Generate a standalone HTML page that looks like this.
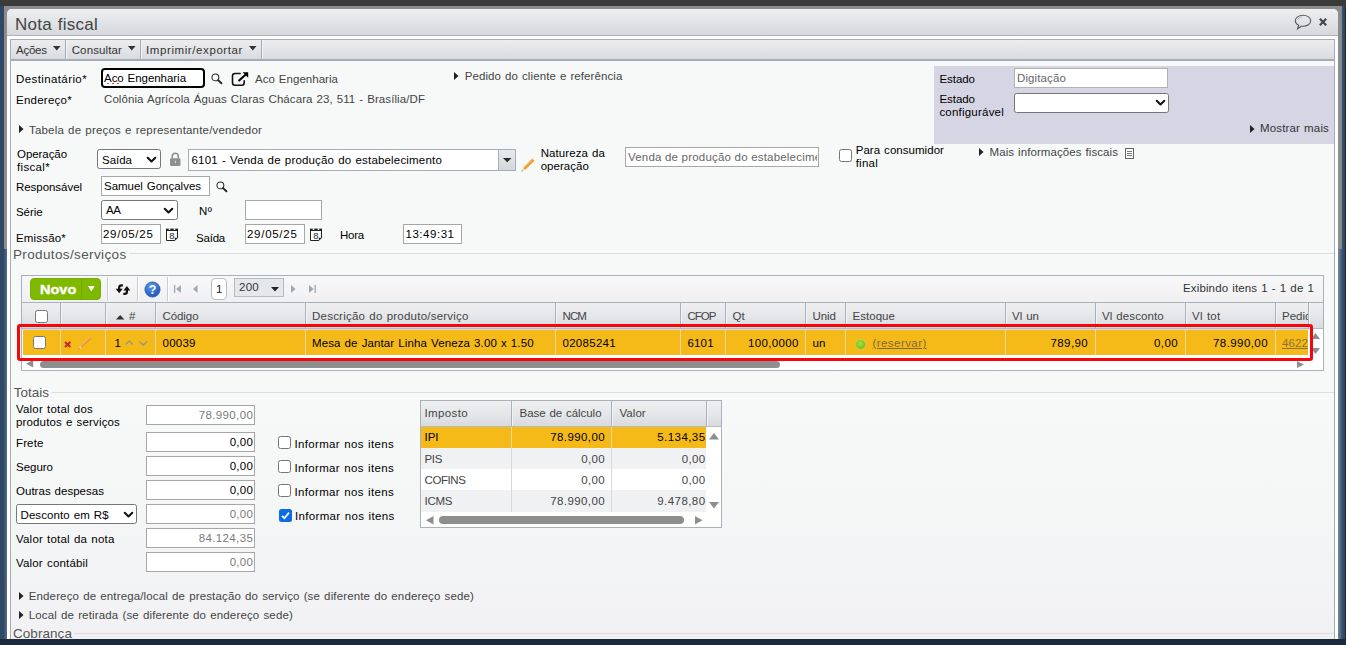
<!DOCTYPE html>
<html><head><meta charset="utf-8"><title>Nota fiscal</title>
<style>
html,body{margin:0;padding:0;}
body{width:1346px;height:645px;position:relative;overflow:hidden;background:#f7f8f8;font-family:"Liberation Sans", sans-serif;font-size:12px;}
div,span,svg{box-sizing:border-box;}
svg{position:absolute;overflow:visible;}

.inp{position:absolute;background:#fff;border:1px solid #a6a6a6;}
.sel{position:absolute;background:#fff;border:1px solid #767676;border-radius:2.5px;}
.cb{position:absolute;width:13px;height:13px;background:#fff;border:1px solid #767676;border-radius:2.5px;}
.hsep{position:absolute;width:1px;background:#a9b1bb;}
.rsep{position:absolute;width:1px;background:#d9c9a0;}
.grad{background:linear-gradient(#f0f0f2,#e4e5e8 55%,#d7d9dd);}

</style></head><body>
<div style="position:absolute;left:0px;top:0px;width:1346px;height:645px;background:#2f4a66;"></div>
<div style="position:absolute;left:0px;top:0px;width:1346px;height:6px;background:#3b3b3b;"></div>
<div style="position:absolute;left:0px;top:6px;width:1346px;height:3px;background:linear-gradient(#6f6f6f,#8d8d8d);"></div>
<div style="position:absolute;left:0px;top:6px;width:4px;height:634px;background:#2d4965;"></div>
<div style="position:absolute;left:4px;top:6px;width:3px;height:244px;background:#8d8d8d;"></div>
<div style="position:absolute;left:4px;top:249px;width:3px;height:391px;background:linear-gradient(90deg,#34506c,#566c84);"></div>
<div style="position:absolute;left:1338px;top:6px;width:4px;height:244px;background:linear-gradient(90deg,#8d8d8d 80%,#6f7f90);"></div>
<div style="position:absolute;left:1338px;top:249px;width:4px;height:391px;background:linear-gradient(90deg,#7a8a9c,#3c5672);"></div>
<div style="position:absolute;left:1342px;top:6px;width:3px;height:634px;background:linear-gradient(90deg,#38536f,#2b4661);"></div>
<div style="position:absolute;left:1345px;top:6px;width:1px;height:634px;background:#23262b;"></div>
<div style="position:absolute;left:4px;top:6px;width:1337px;height:8px;background:#8d8d8d;"></div>
<div style="position:absolute;left:7px;top:9px;width:1331px;height:640px;background:#fff;border-radius:5px 5px 0 0;"></div>
<div style="position:absolute;left:7px;top:9px;width:1331px;height:27px;background:linear-gradient(#eeeff0,#e2e3e6 50%,#d6d8dc);border-radius:5px 5px 0 0;border-bottom:1px solid #a9b2bd;"></div>
<div style="position:absolute;left:10px;top:39px;width:1325px;height:610px;background:linear-gradient(#f7f9f8 60%,#f1f1f3);border-left:1px solid #a3adb9;border-right:1px solid #a3adb9;"></div>
<div style="position:absolute;left:10px;top:39px;width:1325px;height:22px;border:1px solid #a3adb9;border-bottom:2px solid #a3adb9;background:linear-gradient(#ededef,#e3e4e7 50%,#d9dbde);"></div>
<div style="position:absolute;left:65px;top:40px;width:1px;height:19px;background:#a3adb9;"></div>
<div style="position:absolute;left:66px;top:40px;width:1px;height:19px;background:#f4f4f6;"></div>
<div style="position:absolute;left:140px;top:40px;width:1px;height:19px;background:#a3adb9;"></div>
<div style="position:absolute;left:141px;top:40px;width:1px;height:19px;background:#f4f4f6;"></div>
<div style="position:absolute;left:261px;top:40px;width:1px;height:19px;background:#a3adb9;"></div>
<div style="position:absolute;left:262px;top:40px;width:1px;height:19px;background:#f4f4f6;"></div>
<div style="position:absolute;left:0px;top:639px;width:1346px;height:6px;background:#1b2a3d;"></div>
<svg style="left:1294px;top:14px" width="18" height="16" viewBox="0 0 18 16"><path d="M9 1.300C4.700 1.300 1.300 3.700 1.300 6.800C1.300 8.700 2.600 10.300 4.600 11.300L3.500 14.800L7.300 12.200C7.800 12.300 8.400 12.300 9 12.300C13.300 12.300 16.700 9.900 16.700 6.800S13.300 1.300 9 1.300Z" fill="none" stroke="#5a5a5a" stroke-width="1.100"/><path d="M3.500 5.600C4.300 4.100 6 3.200 7.900 3" fill="none" stroke="#999" stroke-width=".8"/></svg>
<svg style="left:1319.200px;top:18px" width="8" height="8" viewBox="0 0 8 8"><path d="M0.800 0.800L7.200 7.200M7.200 0.800L0.800 7.200" stroke="#444" stroke-width="2.100"/></svg>
<svg style="left:53.2px;top:45.8px" width="7.5" height="4.5" viewBox="0 0 7.5 4.5"><path d="M0 0H7.5L3.75 4.5Z" fill="#333"/></svg>
<svg style="left:128.2px;top:45.8px" width="7.5" height="4.5" viewBox="0 0 7.5 4.5"><path d="M0 0H7.5L3.75 4.5Z" fill="#333"/></svg>
<svg style="left:249.2px;top:45.8px" width="7.5" height="4.5" viewBox="0 0 7.5 4.5"><path d="M0 0H7.5L3.75 4.5Z" fill="#333"/></svg>
<div style="position:absolute;left:101px;top:68px;width:104px;height:20px;background:#fff;border:2px solid #000;border-radius:4px;"></div>
<div style="position:absolute;left:107px;top:83px;width:15px;height:1px;background:repeating-linear-gradient(90deg,#f04040 0 2px,transparent 2px 5px);"></div>
<svg style="left:210.5px;top:72.5px" width="12" height="12" viewBox="0 0 12 12"><circle cx="4.400" cy="4.400" r="3.400" fill="#fbfbfb" stroke="#2a2a2a" stroke-width="1.100"/><path d="M7.100 7.100L10.400 10.300" stroke="#222" stroke-width="1.900" stroke-linecap="round"/></svg>
<svg style="left:231px;top:71px" width="18" height="16" viewBox="0 0 18 16"><path d="M9.700 2.500H4Q1.500 2.500 1.500 5V11.700Q1.500 14.200 4 14.200H10.700Q13.200 14.200 13.200 11.700V9.300" fill="none" stroke="#111" stroke-width="1.600"/><path d="M7.600 10L15.300 2.900" stroke="#000" stroke-width="2"/><path d="M11.600 1.300H17.200V6.700Z" fill="#000"/></svg>
<svg style="left:453.5px;top:72px" width="4.5" height="8" viewBox="0 0 4.5 8"><path d="M0 0V8L4.5 4.0Z" fill="#222"/></svg>
<div style="position:absolute;left:934px;top:66px;width:400px;height:78px;background:#d6d5e4;"></div>
<div class="inp" style="left:1014px;top:68px;width:154px;height:20px;border-color:#b2b2b2"></div>
<div class="sel" style="left:1014px;top:93px;width:155px;height:20px;"></div>
<svg style="left:1155.5px;top:100.2px" width="9" height="5.5" viewBox="0 0 9 5.5"><path d="M0.700 0.700L4.5 4.5L8.3 0.700" fill="none" stroke="#111" stroke-width="2" stroke-linecap="round" stroke-linejoin="round"/></svg>
<svg style="left:1249.5px;top:124.5px" width="4.5" height="8" viewBox="0 0 4.5 8"><path d="M0 0V8L4.5 4.0Z" fill="#222"/></svg>
<svg style="left:19.0px;top:125px" width="4.5" height="8" viewBox="0 0 4.5 8"><path d="M0 0V8L4.5 4.0Z" fill="#222"/></svg>
<div class="sel" style="left:97px;top:149px;width:64px;height:20px;"></div>
<svg style="left:147px;top:157px" width="9" height="5.5" viewBox="0 0 9 5.5"><path d="M0.700 0.700L4.5 4.5L8.3 0.700" fill="none" stroke="#111" stroke-width="2" stroke-linecap="round" stroke-linejoin="round"/></svg>
<svg style="left:170px;top:152px" width="11" height="14" viewBox="0 0 11 14"><path d="M2.300 6.500V4C2.300 2.200 3.600 1.200 5.250 1.200S8.200 2.200 8.200 4V6.500" fill="none" stroke="#8f8f8f" stroke-width="1.600"/><rect x="0" y="6.200" width="10.500" height="7.700" rx="1.200" fill="#8f8f8f"/><path d="M4.600 9L5.900 8.600V11.200H5.200Z" fill="#d8d8d8"/></svg>
<div class="inp" style="left:188px;top:149px;width:328px;height:22px;border-color:#a3adbb;"></div>
<div style="position:absolute;left:498px;top:150px;width:17px;height:20px;border-left:1px solid #a3adbb;background:linear-gradient(#e9eaec,#d4d7db);"></div>
<svg style="left:502.7px;top:158px" width="8.5" height="4.2" viewBox="0 0 8.5 4.2"><path d="M0 0H8.5L4.25 4.2Z" fill="#2a2a2a"/></svg>
<svg style="left:520.5px;top:157.5px" width="14.0" height="14.0" viewBox="0 0 14 14"><path d="M11.340 0.540L13.460 2.660L4.060 12.060L1.940 9.940Z" fill="#f09a2e"/><path d="M11.340 0.540L12.050 1.250L2.650 10.650L1.940 9.940Z" fill="#f6bd74"/><path d="M1.940 9.940L4.060 12.060L0.500 13.500Z" fill="#f3dcb8"/><path d="M0.500 13.500L0.950 12.200L1.800 13Z" fill="#333"/></svg>
<div class="inp" style="left:625px;top:147px;width:194px;height:20px;border-color:#a8a8a8"></div>
<div class="cb" style="left:839px;top:149px;"></div>
<svg style="left:978.5px;top:148px" width="4.5" height="8" viewBox="0 0 4.5 8"><path d="M0 0V8L4.5 4.0Z" fill="#222"/></svg>
<svg style="left:1125px;top:148px" width="9" height="11" viewBox="0 0 9 11"><rect x=".5" y=".5" width="8" height="10" fill="#fff" stroke="#666"/><path d="M2 3.500H7M2 5.500H7M2 7.500H7" stroke="#666" stroke-width=".9"/></svg>
<div class="inp" style="left:101px;top:176px;width:109px;height:20px;"></div>
<svg style="left:216px;top:180.5px" width="12" height="12" viewBox="0 0 12 12"><circle cx="4.400" cy="4.400" r="3.400" fill="#fbfbfb" stroke="#2a2a2a" stroke-width="1.100"/><path d="M7.100 7.100L10.400 10.300" stroke="#222" stroke-width="1.900" stroke-linecap="round"/></svg>
<div class="sel" style="left:101px;top:200px;width:77px;height:20px;"></div>
<svg style="left:164px;top:208px" width="9" height="5.5" viewBox="0 0 9 5.5"><path d="M0.700 0.700L4.5 4.5L8.3 0.700" fill="none" stroke="#111" stroke-width="2" stroke-linecap="round" stroke-linejoin="round"/></svg>
<div class="inp" style="left:245px;top:200px;width:77px;height:20px;"></div>
<div class="inp" style="left:101px;top:224px;width:60px;height:20px;"></div>
<svg style="left:166px;top:228px" width="12" height="13" viewBox="0 0 12 13"><path d="M.5 1.500H11.500V9.800L8.800 12.500H.5Z" fill="#fff" stroke="#222" stroke-width="1"/><rect x="0" y=".6" width="12" height="2.400" fill="#222"/><circle cx="3.500" cy="1.200" r=".85" fill="#fff"/><circle cx="8.500" cy="1.200" r=".85" fill="#fff"/><path d="M8.800 12.500V9.800H11.500Z" fill="#222"/><text x="5.900" y="11.300" text-anchor="middle" font-family="Liberation Sans" font-size="9.500" fill="#222">8</text></svg>
<div class="inp" style="left:245px;top:224px;width:60px;height:20px;"></div>
<svg style="left:310px;top:228px" width="12" height="13" viewBox="0 0 12 13"><path d="M.5 1.500H11.500V9.800L8.800 12.500H.5Z" fill="#fff" stroke="#222" stroke-width="1"/><rect x="0" y=".6" width="12" height="2.400" fill="#222"/><circle cx="3.500" cy="1.200" r=".85" fill="#fff"/><circle cx="8.500" cy="1.200" r=".85" fill="#fff"/><path d="M8.800 12.500V9.800H11.500Z" fill="#222"/><text x="5.900" y="11.300" text-anchor="middle" font-family="Liberation Sans" font-size="9.500" fill="#222">8</text></svg>
<div class="inp" style="left:403px;top:224px;width:59px;height:20px;"></div>
<div style="position:absolute;left:129px;top:253px;width:1205px;height:1px;background:#dcdddf;"></div>
<div style="position:absolute;left:21px;top:275px;width:1303px;height:96px;background:#fff;border:1px solid #a9b1bb;"></div>
<div style="position:absolute;left:22px;top:276px;width:1301px;height:26px;background:linear-gradient(#f8f8f9,#f0f0f2);"></div>
<div style="position:absolute;left:30px;top:278px;width:71px;height:22px;background:#7eb900;border:1px solid #78b000;border-radius:4px;"></div>
<div style="position:absolute;left:81px;top:279px;width:1px;height:20px;background:#74a900;"></div>
<svg style="left:87.800px;top:286.400px" width="6.700" height="5.500" viewBox="0 0 6.700 5.500"><path d="M0 0H6.700L3.350 5.500Z" fill="#fff"/></svg>
<div style="position:absolute;left:107px;top:277px;width:1px;height:24px;background:#c9ccd1;"></div>
<div style="position:absolute;left:108px;top:277px;width:1px;height:24px;background:#fff;"></div>
<div style="position:absolute;left:137px;top:277px;width:1px;height:24px;background:#c9ccd1;"></div>
<div style="position:absolute;left:138px;top:277px;width:1px;height:24px;background:#fff;"></div>
<div style="position:absolute;left:167px;top:277px;width:1px;height:24px;background:#c9ccd1;"></div>
<div style="position:absolute;left:168px;top:277px;width:1px;height:24px;background:#fff;"></div>
<svg style="left:116px;top:283.500px" width="14" height="11" viewBox="0 0 14 11"><path d="M6.900 1.300H5.400Q3.200 1.300 3.200 3.400V5.400" fill="none" stroke="#111" stroke-width="2.200"/><path d="M-0.300 4.700H6.700L3.200 9.200Z" fill="#111"/><path d="M7.300 9.900H8.700Q10.900 9.900 10.900 7.800V6" fill="none" stroke="#111" stroke-width="2.200"/><path d="M7.400 6.400H14.300L10.900 1.900Z" fill="#111"/></svg>
<svg style="left:143.500px;top:280.500px" width="17" height="17" viewBox="0 0 17 17"><defs><radialGradient id="hg" cx=".4" cy=".3" r=".8"><stop offset="0" stop-color="#5a9af0"/><stop offset="1" stop-color="#184cb4"/></radialGradient></defs><circle cx="8.500" cy="8.500" r="7.600" fill="url(#hg)" stroke="#2a5db0" stroke-width=".8"/><text x="8.500" y="13" text-anchor="middle" font-family="Liberation Sans" font-weight="bold" font-size="12.500" fill="#fff">?</text></svg>
<svg style="left:173.700px;top:285px" width="7" height="8" viewBox="0 0 7 8"><path d="M0.600 0V8" stroke="#a0a7b0" stroke-width="1.300"/><path d="M6.800 0V8L2.200 4Z" fill="#a0a7b0"/></svg>
<svg style="left:193px;top:285px" width="4.500" height="8" viewBox="0 0 4.500 8"><path d="M4.500 0V8L0 4Z" fill="#a0a7b0"/></svg>
<div style="position:absolute;left:211px;top:278px;width:16px;height:22px;background:#fff;border:1px solid #b9bec6;border-radius:4px;"></div>
<div style="position:absolute;left:234px;top:278px;width:50px;height:19px;background:#e6e7ea;border:1px solid #b4bac2;"></div>
<svg style="left:270.5px;top:286.5px" width="8" height="4.5" viewBox="0 0 8 4.5"><path d="M0 0H8L4.0 4.5Z" fill="#222"/></svg>
<svg style="left:291px;top:285px" width="4.500" height="8" viewBox="0 0 4.500 8"><path d="M0 0V8L4.500 4Z" fill="#a0a7b0"/></svg>
<svg style="left:308.500px;top:285px" width="7" height="8" viewBox="0 0 7 8"><path d="M6.200 0V8" stroke="#a0a7b0" stroke-width="1.300"/><path d="M0 0V8L4.600 4Z" fill="#a0a7b0"/></svg>
<div style="position:absolute;left:22px;top:302px;width:1301px;height:27px;background:linear-gradient(#efeff1,#e6e7ea 50%,#d8dade);border-top:1px solid #a9b1bb;border-bottom:1px solid #b5bbc4;"></div>
<div style="position:absolute;left:60px;top:303px;width:1px;height:25px;background:#a9b1bb;"></div>
<div style="position:absolute;left:61px;top:303px;width:1px;height:25px;background:#f3f3f5;"></div>
<div style="position:absolute;left:105px;top:303px;width:1px;height:25px;background:#a9b1bb;"></div>
<div style="position:absolute;left:106px;top:303px;width:1px;height:25px;background:#f3f3f5;"></div>
<div style="position:absolute;left:155px;top:303px;width:1px;height:25px;background:#a9b1bb;"></div>
<div style="position:absolute;left:156px;top:303px;width:1px;height:25px;background:#f3f3f5;"></div>
<div style="position:absolute;left:305px;top:303px;width:1px;height:25px;background:#a9b1bb;"></div>
<div style="position:absolute;left:306px;top:303px;width:1px;height:25px;background:#f3f3f5;"></div>
<div style="position:absolute;left:555px;top:303px;width:1px;height:25px;background:#a9b1bb;"></div>
<div style="position:absolute;left:556px;top:303px;width:1px;height:25px;background:#f3f3f5;"></div>
<div style="position:absolute;left:680px;top:303px;width:1px;height:25px;background:#a9b1bb;"></div>
<div style="position:absolute;left:681px;top:303px;width:1px;height:25px;background:#f3f3f5;"></div>
<div style="position:absolute;left:725px;top:303px;width:1px;height:25px;background:#a9b1bb;"></div>
<div style="position:absolute;left:726px;top:303px;width:1px;height:25px;background:#f3f3f5;"></div>
<div style="position:absolute;left:805px;top:303px;width:1px;height:25px;background:#a9b1bb;"></div>
<div style="position:absolute;left:806px;top:303px;width:1px;height:25px;background:#f3f3f5;"></div>
<div style="position:absolute;left:845px;top:303px;width:1px;height:25px;background:#a9b1bb;"></div>
<div style="position:absolute;left:846px;top:303px;width:1px;height:25px;background:#f3f3f5;"></div>
<div style="position:absolute;left:1005px;top:303px;width:1px;height:25px;background:#a9b1bb;"></div>
<div style="position:absolute;left:1006px;top:303px;width:1px;height:25px;background:#f3f3f5;"></div>
<div style="position:absolute;left:1095px;top:303px;width:1px;height:25px;background:#a9b1bb;"></div>
<div style="position:absolute;left:1096px;top:303px;width:1px;height:25px;background:#f3f3f5;"></div>
<div style="position:absolute;left:1185px;top:303px;width:1px;height:25px;background:#a9b1bb;"></div>
<div style="position:absolute;left:1186px;top:303px;width:1px;height:25px;background:#f3f3f5;"></div>
<div style="position:absolute;left:1275px;top:303px;width:1px;height:25px;background:#a9b1bb;"></div>
<div style="position:absolute;left:1276px;top:303px;width:1px;height:25px;background:#f3f3f5;"></div>
<div style="position:absolute;left:1308px;top:303px;width:1px;height:25px;background:#a9b1bb;"></div>
<div style="position:absolute;left:1309px;top:303px;width:1px;height:25px;background:#f3f3f5;"></div>
<div class="cb" style="left:35px;top:310px;"></div>
<svg style="left:116px;top:314.800px" width="8.400" height="4.500" viewBox="0 0 8.400 4.500"><path d="M0 4.500H8.400L4.200 0Z" fill="#333"/></svg>
<div style="position:absolute;left:22px;top:329px;width:1287px;height:1px;background:#d5d9df;"></div>
<div style="position:absolute;left:23px;top:330px;width:1285px;height:25px;background:#f5b918;"></div>
<div style="position:absolute;left:60px;top:330px;width:1px;height:25px;background:#e8d9a8;"></div>
<div style="position:absolute;left:105px;top:330px;width:1px;height:25px;background:#e8d9a8;"></div>
<div style="position:absolute;left:155px;top:330px;width:1px;height:25px;background:#e8d9a8;"></div>
<div style="position:absolute;left:305px;top:330px;width:1px;height:25px;background:#e8d9a8;"></div>
<div style="position:absolute;left:555px;top:330px;width:1px;height:25px;background:#e8d9a8;"></div>
<div style="position:absolute;left:680px;top:330px;width:1px;height:25px;background:#e8d9a8;"></div>
<div style="position:absolute;left:725px;top:330px;width:1px;height:25px;background:#e8d9a8;"></div>
<div style="position:absolute;left:805px;top:330px;width:1px;height:25px;background:#e8d9a8;"></div>
<div style="position:absolute;left:845px;top:330px;width:1px;height:25px;background:#e8d9a8;"></div>
<div style="position:absolute;left:1005px;top:330px;width:1px;height:25px;background:#e8d9a8;"></div>
<div style="position:absolute;left:1095px;top:330px;width:1px;height:25px;background:#e8d9a8;"></div>
<div style="position:absolute;left:1185px;top:330px;width:1px;height:25px;background:#e8d9a8;"></div>
<div style="position:absolute;left:1275px;top:330px;width:1px;height:25px;background:#e8d9a8;"></div>
<div class="cb" style="left:33px;top:336px;"></div>
<svg style="left:64px;top:340.500px" width="7.400" height="7" viewBox="0 0 7.400 7"><path d="M1 0.900L6.400 6.100M6.400 0.900L1 6.100" stroke="#c8283a" stroke-width="2.100"/></svg>
<svg style="left:77.5px;top:335.5px" width="14.0" height="14.0" viewBox="0 0 14 14"><path d="M11.340 0.540L13.460 2.660L4.060 12.060L1.940 9.940Z" fill="#f09a2e"/><path d="M11.340 0.540L12.050 1.250L2.650 10.650L1.940 9.940Z" fill="#f6bd74"/><path d="M1.940 9.940L4.060 12.060L0.500 13.500Z" fill="#f3dcb8"/><path d="M0.500 13.500L0.950 12.200L1.800 13Z" fill="#333"/></svg>
<svg style="left:125px;top:340.300px" width="8.400" height="5" viewBox="0 0 8.400 5"><path d="M0.500 4.600L4.200 0.900L7.900 4.600" fill="none" stroke="#9c9788" stroke-width="1.400"/></svg>
<svg style="left:138.800px;top:340.800px" width="8.400" height="5" viewBox="0 0 8.400 5"><path d="M0.500 0.400L4.200 4.100L7.900 0.400" fill="none" stroke="#9c9788" stroke-width="1.400"/></svg>
<svg style="left:855px;top:338.500px" width="11" height="11" viewBox="0 0 11 11"><defs><radialGradient id="gg" cx=".45" cy=".4" r=".7"><stop offset="0" stop-color="#a6e03a"/><stop offset="1" stop-color="#6cb512"/></radialGradient></defs><circle cx="5.500" cy="5.500" r="5" fill="url(#gg)" stroke="#c8d86a" stroke-width=".8"/></svg>
<svg style="left:1311px;top:332.500px" width="9" height="6" viewBox="0 0 9 6"><path d="M0 6H9L4.500 0Z" fill="#8e8e8e"/></svg>
<svg style="left:1311px;top:347.500px" width="9" height="6" viewBox="0 0 9 6"><path d="M0 0H9L4.500 6Z" fill="#8e8e8e"/></svg>
<svg style="left:26.300px;top:359.500px" width="7.200" height="7.500" viewBox="0 0 7.200 7.500"><path d="M7.200 0V7.500L0 3.750Z" fill="#8e8e8e"/></svg>
<div style="position:absolute;left:40px;top:361px;width:740px;height:7px;background:#8e8e8e;border-radius:4px;"></div>
<svg style="left:1297px;top:360.500px" width="7" height="7" viewBox="0 0 7 7"><path d="M0 0V7L7 3.500Z" fill="#8e8e8e"/></svg>
<div style="position:absolute;left:17px;top:324px;width:1296px;height:37px;border:solid #f5060c;border-width:3px 3px 3px 3.500px;border-radius:3px;"></div>
<div style="position:absolute;left:51px;top:392px;width:1283px;height:1px;background:#dcdddf;"></div>
<div class="inp" style="left:146px;top:405px;width:109px;height:20px;"></div>
<div class="inp" style="left:146px;top:432px;width:109px;height:20px;"></div>
<div class="inp" style="left:146px;top:456px;width:109px;height:20px;"></div>
<div class="inp" style="left:146px;top:480px;width:109px;height:20px;"></div>
<div class="sel" style="left:16px;top:504px;width:121px;height:20px;"></div>
<svg style="left:124px;top:512px" width="9" height="5.5" viewBox="0 0 9 5.5"><path d="M0.700 0.700L4.5 4.5L8.3 0.700" fill="none" stroke="#111" stroke-width="2" stroke-linecap="round" stroke-linejoin="round"/></svg>
<div class="inp" style="left:146px;top:504px;width:109px;height:20px;"></div>
<div class="inp" style="left:146px;top:528px;width:109px;height:20px;"></div>
<div class="inp" style="left:146px;top:552px;width:109px;height:20px;"></div>
<div class="cb" style="left:278px;top:436px;"></div>
<div class="cb" style="left:278px;top:460px;"></div>
<div class="cb" style="left:278px;top:484px;"></div>
<div style="position:absolute;left:279px;top:508.500px;width:13px;height:13px;background:#0b6ce8;border-radius:2.500px;"></div>
<svg style="left:279px;top:508.500px" width="13" height="13" viewBox="0 0 13 13"><path d="M3 6.800L5.400 9.200L10 3.600" fill="none" stroke="#fff" stroke-width="1.800"/></svg>
<div style="position:absolute;left:420px;top:400px;width:302px;height:128px;background:#fff;border:1px solid #a9b1bb;"></div>
<div style="position:absolute;left:421px;top:401px;width:300px;height:26px;background:linear-gradient(#efeff1,#e6e7ea 50%,#d8dade);border-bottom:1px solid #b5bbc4;"></div>
<div style="position:absolute;left:511px;top:401px;width:1px;height:25px;background:#a9b1bb;"></div>
<div style="position:absolute;left:512px;top:401px;width:1px;height:25px;background:#f3f3f5;"></div>
<div style="position:absolute;left:611px;top:401px;width:1px;height:25px;background:#a9b1bb;"></div>
<div style="position:absolute;left:612px;top:401px;width:1px;height:25px;background:#f3f3f5;"></div>
<div style="position:absolute;left:706px;top:401px;width:1px;height:25px;background:#a9b1bb;"></div>
<div style="position:absolute;left:707px;top:401px;width:1px;height:25px;background:#f3f3f5;"></div>
<div style="position:absolute;left:421px;top:427px;width:285px;height:21px;background:#f5b918;"></div>
<div style="position:absolute;left:511px;top:427px;width:1px;height:21px;background:#e8d9a8;"></div>
<div style="position:absolute;left:611px;top:427px;width:1px;height:21px;background:#e8d9a8;"></div>
<div style="position:absolute;left:421px;top:448px;width:285px;height:21px;background:#f0f1f3;"></div>
<div style="position:absolute;left:511px;top:448px;width:1px;height:21px;background:#d6d8dc;"></div>
<div style="position:absolute;left:611px;top:448px;width:1px;height:21px;background:#d6d8dc;"></div>
<div style="position:absolute;left:421px;top:469px;width:285px;height:21px;background:#fff;"></div>
<div style="position:absolute;left:511px;top:469px;width:1px;height:21px;background:#d6d8dc;"></div>
<div style="position:absolute;left:611px;top:469px;width:1px;height:21px;background:#d6d8dc;"></div>
<div style="position:absolute;left:421px;top:490px;width:285px;height:21.5px;background:#f0f1f3;"></div>
<div style="position:absolute;left:511px;top:490px;width:1px;height:21.5px;background:#d6d8dc;"></div>
<div style="position:absolute;left:611px;top:490px;width:1px;height:21.5px;background:#d6d8dc;"></div>
<svg style="left:709px;top:432.500px" width="10" height="6.500" viewBox="0 0 10 6.500"><path d="M0 6.500H10L5 0Z" fill="#8e8e8e"/></svg>
<svg style="left:709px;top:501.500px" width="10" height="6.500" viewBox="0 0 10 6.500"><path d="M0 0H10L5 6.500Z" fill="#8e8e8e"/></svg>
<svg style="left:425.500px;top:515.500px" width="7.500" height="8.500" viewBox="0 0 7.500 8.500"><path d="M7.500 0V8.500L0 4.250Z" fill="#8e8e8e"/></svg>
<div style="position:absolute;left:439px;top:515.5px;width:245px;height:8.5px;background:#8e8e8e;border-radius:4.500px;"></div>
<svg style="left:695px;top:515.500px" width="7.500" height="8.500" viewBox="0 0 7.500 8.500"><path d="M0 0V8.500L7.500 4.250Z" fill="#8e8e8e"/></svg>
<svg style="left:19.0px;top:591.5px" width="4.5" height="8" viewBox="0 0 4.5 8"><path d="M0 0V8L4.5 4.0Z" fill="#222"/></svg>
<svg style="left:19.0px;top:610.5px" width="4.5" height="8" viewBox="0 0 4.5 8"><path d="M0 0V8L4.5 4.0Z" fill="#222"/></svg>
<div style="position:absolute;left:74px;top:633px;width:1260px;height:1px;background:#dcdddf;"></div>
<span style="position:absolute;left:15.00px;top:13.00px;height:23px;line-height:23px;white-space:pre;font-size:17px;color:#444;letter-spacing:0.266px;word-spacing:0.7px;">Nota fiscal</span>
<span style="position:absolute;left:16.00px;top:42.00px;height:16px;line-height:16px;white-space:pre;font-size:11.5px;color:#333;letter-spacing:-0.254px;">Ações</span>
<span style="position:absolute;left:71.70px;top:42.00px;height:16px;line-height:16px;white-space:pre;font-size:11.5px;color:#333;letter-spacing:0.120px;">Consultar</span>
<span style="position:absolute;left:146.00px;top:42.00px;height:16px;line-height:16px;white-space:pre;font-size:11.5px;color:#333;letter-spacing:0.594px;">Imprimir/exportar</span>
<span style="position:absolute;left:16.00px;top:71.00px;height:16px;line-height:16px;white-space:pre;font-size:11.5px;color:#000;letter-spacing:0.397px;">Destinatário*</span>
<span style="position:absolute;left:104.00px;top:70.00px;height:16px;line-height:16px;white-space:pre;font-size:11.5px;color:#000;letter-spacing:-0.039px;word-spacing:0.7px;">Aco Engenharia</span>
<span style="position:absolute;left:255.00px;top:71.00px;height:16px;line-height:16px;white-space:pre;font-size:11.5px;color:#444;letter-spacing:0.033px;word-spacing:0.7px;">Aco Engenharia</span>
<span style="position:absolute;left:464.70px;top:68.00px;height:16px;line-height:16px;white-space:pre;font-size:11.5px;color:#444;letter-spacing:0.095px;word-spacing:0.7px;">Pedido do cliente e referência</span>
<span style="position:absolute;left:16.00px;top:92.00px;height:16px;line-height:16px;white-space:pre;font-size:11.5px;color:#000;letter-spacing:0.253px;">Endereço*</span>
<span style="position:absolute;left:104.00px;top:91.00px;height:16px;line-height:16px;white-space:pre;font-size:11.5px;color:#444;letter-spacing:0.084px;word-spacing:0.7px;">Colônia Agrícola Águas Claras Chácara 23, 511 - Brasília/DF</span>
<span style="position:absolute;left:939.40px;top:71.00px;height:16px;line-height:16px;white-space:pre;font-size:11.5px;color:#000;letter-spacing:-0.035px;">Estado</span>
<span style="position:absolute;left:1017.00px;top:70.00px;height:16px;line-height:16px;white-space:pre;font-size:11.5px;color:#666;letter-spacing:0.116px;">Digitação</span>
<span style="position:absolute;left:939.40px;top:91.00px;height:16px;line-height:16px;white-space:pre;font-size:11.5px;color:#000;letter-spacing:-0.035px;">Estado</span>
<span style="position:absolute;left:939.40px;top:104.00px;height:16px;line-height:16px;white-space:pre;font-size:11.5px;color:#000;letter-spacing:0.215px;">configurável</span>
<span style="position:absolute;left:1260.00px;top:120.00px;height:16px;line-height:16px;white-space:pre;font-size:11.5px;color:#333;letter-spacing:0.154px;word-spacing:0.7px;">Mostrar mais</span>
<span style="position:absolute;left:29.00px;top:122.00px;height:16px;line-height:16px;white-space:pre;font-size:11.5px;color:#444;letter-spacing:0.188px;word-spacing:0.7px;">Tabela de preços e representante/vendedor</span>
<span style="position:absolute;left:17.00px;top:146.00px;height:16px;line-height:16px;white-space:pre;font-size:11.5px;color:#000;letter-spacing:-0.064px;">Operação</span>
<span style="position:absolute;left:17.00px;top:159.00px;height:16px;line-height:16px;white-space:pre;font-size:11.5px;color:#000;letter-spacing:0.330px;">fiscal*</span>
<span style="position:absolute;left:102.00px;top:152.00px;height:16px;line-height:16px;white-space:pre;font-size:11.5px;color:#000;letter-spacing:-0.013px;">Saída</span>
<span style="position:absolute;left:191.50px;top:152.00px;height:16px;line-height:16px;white-space:pre;font-size:11.5px;color:#000;letter-spacing:0.181px;word-spacing:0.7px;">6101 - Venda de produção do estabelecimento</span>
<span style="position:absolute;left:540.70px;top:145.00px;height:16px;line-height:16px;white-space:pre;font-size:11.5px;color:#000;letter-spacing:0.086px;word-spacing:0.7px;">Natureza da</span>
<span style="position:absolute;left:540.70px;top:158.00px;height:16px;line-height:16px;white-space:pre;font-size:11.5px;color:#000;letter-spacing:0.041px;">operação</span>
<span style="position:absolute;left:628.00px;top:149.00px;height:16px;line-height:16px;white-space:pre;font-size:11.5px;color:#666;width:189px;overflow:hidden;letter-spacing:0.2px;">Venda de produção do estabelecimento</span>
<span style="position:absolute;left:855.70px;top:142.00px;height:16px;line-height:16px;white-space:pre;font-size:11.5px;color:#000;letter-spacing:0.044px;word-spacing:0.7px;">Para consumidor</span>
<span style="position:absolute;left:855.70px;top:155.00px;height:16px;line-height:16px;white-space:pre;font-size:11.5px;color:#000;letter-spacing:0.238px;">final</span>
<span style="position:absolute;left:989.50px;top:144.00px;height:16px;line-height:16px;white-space:pre;font-size:11.5px;color:#444;letter-spacing:0.076px;word-spacing:0.7px;">Mais informações fiscais</span>
<span style="position:absolute;left:16.00px;top:179.00px;height:16px;line-height:16px;white-space:pre;font-size:11.5px;color:#000;letter-spacing:-0.044px;">Responsável</span>
<span style="position:absolute;left:104.00px;top:178.00px;height:16px;line-height:16px;white-space:pre;font-size:11.5px;color:#000;letter-spacing:-0.014px;word-spacing:0.7px;">Samuel Gonçalves</span>
<span style="position:absolute;left:16.00px;top:204.00px;height:16px;line-height:16px;white-space:pre;font-size:11.5px;color:#000;letter-spacing:-0.072px;">Série</span>
<span style="position:absolute;left:106.00px;top:202.00px;height:16px;line-height:16px;white-space:pre;font-size:11.5px;color:#000;letter-spacing:-0.422px;">AA</span>
<span style="position:absolute;left:199.00px;top:203.00px;height:16px;line-height:16px;white-space:pre;font-size:11.5px;color:#000;letter-spacing:0.492px;">Nº</span>
<span style="position:absolute;left:16.00px;top:230.00px;height:16px;line-height:16px;white-space:pre;font-size:11.5px;color:#000;letter-spacing:0.178px;">Emissão*</span>
<span style="position:absolute;left:103.00px;top:226.00px;height:16px;line-height:16px;white-space:pre;font-size:11.5px;color:#000;letter-spacing:0.717px;">29/05/25</span>
<span style="position:absolute;left:196.00px;top:230.00px;height:16px;line-height:16px;white-space:pre;font-size:11.5px;color:#000;letter-spacing:-0.212px;">Saída</span>
<span style="position:absolute;left:247.00px;top:226.00px;height:16px;line-height:16px;white-space:pre;font-size:11.5px;color:#000;letter-spacing:0.717px;">29/05/25</span>
<span style="position:absolute;left:340.00px;top:227.00px;height:16px;line-height:16px;white-space:pre;font-size:11.5px;color:#000;letter-spacing:-0.234px;">Hora</span>
<span style="position:absolute;left:405.50px;top:226.00px;height:16px;line-height:16px;white-space:pre;font-size:11.5px;color:#000;letter-spacing:0.529px;">13:49:31</span>
<span style="position:absolute;left:13.00px;top:245.00px;height:19px;line-height:19px;white-space:pre;font-size:13.5px;color:#555;letter-spacing:0.365px;">Produtos/serviços</span>
<span style="position:absolute;left:40.00px;top:280.00px;height:19px;line-height:19px;white-space:pre;font-size:13px;color:#fff;font-weight:bold;transform:scaleX(1.115);transform-origin:0 0;-webkit-text-stroke:0.35px #fff;">Novo</span>
<span style="position:absolute;left:216.00px;top:281.00px;height:16px;line-height:16px;white-space:pre;font-size:11.5px;color:#222;">1</span>
<span style="position:absolute;left:239.00px;top:279.00px;height:16px;line-height:16px;white-space:pre;font-size:11.5px;color:#333;letter-spacing:0.271px;">200</span>
<span style="position:absolute;left:1183.00px;top:280.00px;height:16px;line-height:16px;white-space:pre;font-size:11.5px;color:#333;letter-spacing:0.136px;word-spacing:0.7px;">Exibindo itens 1 - 1 de 1</span>
<span style="position:absolute;left:129.00px;top:308.00px;height:16px;line-height:16px;white-space:pre;font-size:11.5px;color:#444;letter-spacing:0.594px;">#</span>
<span style="position:absolute;left:162.50px;top:308.00px;height:16px;line-height:16px;white-space:pre;font-size:11.5px;color:#444;letter-spacing:-0.076px;">Código</span>
<span style="position:absolute;left:312.00px;top:308.00px;height:16px;line-height:16px;white-space:pre;font-size:11.5px;color:#444;letter-spacing:0.227px;word-spacing:0.7px;">Descrição do produto/serviço</span>
<span style="position:absolute;left:562.50px;top:308.00px;height:16px;line-height:16px;white-space:pre;font-size:11.5px;color:#444;letter-spacing:-0.901px;">NCM</span>
<span style="position:absolute;left:687.50px;top:308.00px;height:16px;line-height:16px;white-space:pre;font-size:11.5px;color:#444;letter-spacing:-0.988px;">CFOP</span>
<span style="position:absolute;left:732.50px;top:308.00px;height:16px;line-height:16px;white-space:pre;font-size:11.5px;color:#444;letter-spacing:-0.070px;">Qt</span>
<span style="position:absolute;left:812.50px;top:308.00px;height:16px;line-height:16px;white-space:pre;font-size:11.5px;color:#444;letter-spacing:-0.114px;">Unid</span>
<span style="position:absolute;left:852.50px;top:308.00px;height:16px;line-height:16px;white-space:pre;font-size:11.5px;color:#444;letter-spacing:0.042px;">Estoque</span>
<span style="position:absolute;left:1012.00px;top:308.00px;height:16px;line-height:16px;white-space:pre;font-size:11.5px;color:#444;letter-spacing:0.016px;word-spacing:0.7px;">Vl un</span>
<span style="position:absolute;left:1102.00px;top:308.00px;height:16px;line-height:16px;white-space:pre;font-size:11.5px;color:#444;letter-spacing:0.081px;word-spacing:0.7px;">Vl desconto</span>
<span style="position:absolute;left:1192.00px;top:308.00px;height:16px;line-height:16px;white-space:pre;font-size:11.5px;color:#444;letter-spacing:0.264px;word-spacing:0.7px;">Vl tot</span>
<span style="position:absolute;left:1282.00px;top:308.00px;height:16px;line-height:16px;white-space:pre;font-size:11.5px;color:#444;width:26px;overflow:hidden;">Pedido</span>
<span style="position:absolute;left:114.50px;top:335.00px;height:16px;line-height:16px;white-space:pre;font-size:11.5px;color:#000;">1</span>
<span style="position:absolute;left:162.50px;top:335.00px;height:16px;line-height:16px;white-space:pre;font-size:11.5px;color:#000;letter-spacing:0.243px;">00039</span>
<span style="position:absolute;left:312.00px;top:335.00px;height:16px;line-height:16px;white-space:pre;font-size:11.5px;color:#000;letter-spacing:0.116px;word-spacing:0.7px;">Mesa de Jantar Linha Veneza 3.00 x 1.50</span>
<span style="position:absolute;left:562.50px;top:335.00px;height:16px;line-height:16px;white-space:pre;font-size:11.5px;color:#000;letter-spacing:0.291px;">02085241</span>
<span style="position:absolute;left:687.50px;top:335.00px;height:16px;line-height:16px;white-space:pre;font-size:11.5px;color:#000;letter-spacing:0.152px;">6101</span>
<span style="position:absolute;left:748.00px;top:335.00px;height:16px;line-height:16px;white-space:pre;font-size:11.5px;color:#000;letter-spacing:0.341px;">100,0000</span>
<span style="position:absolute;left:812.50px;top:335.00px;height:16px;line-height:16px;white-space:pre;font-size:11.5px;color:#000;letter-spacing:0.202px;">un</span>
<span style="position:absolute;left:872.50px;top:335.00px;height:16px;line-height:16px;white-space:pre;font-size:11.5px;color:#7d6a3a;letter-spacing:0.436px;text-decoration:underline;">(reservar)</span>
<span style="position:absolute;left:1050.60px;top:335.00px;height:16px;line-height:16px;white-space:pre;font-size:11.5px;color:#000;letter-spacing:0.369px;">789,90</span>
<span style="position:absolute;left:1154.00px;top:335.00px;height:16px;line-height:16px;white-space:pre;font-size:11.5px;color:#000;letter-spacing:0.402px;">0,00</span>
<span style="position:absolute;left:1213.00px;top:335.00px;height:16px;line-height:16px;white-space:pre;font-size:11.5px;color:#000;letter-spacing:0.425px;">78.990,00</span>
<span style="position:absolute;left:1282.00px;top:335.00px;height:16px;line-height:16px;white-space:pre;font-size:11.5px;color:#8a7338;letter-spacing:0.102px;text-decoration:underline;">4622</span>
<span style="position:absolute;left:13.70px;top:383.00px;height:19px;line-height:19px;white-space:pre;font-size:13.5px;color:#555;">Totais</span>
<span style="position:absolute;left:16.00px;top:401.00px;height:16px;line-height:16px;white-space:pre;font-size:11.5px;color:#000;letter-spacing:0.195px;word-spacing:0.7px;">Valor total dos</span>
<span style="position:absolute;left:16.00px;top:414.00px;height:16px;line-height:16px;white-space:pre;font-size:11.5px;color:#000;letter-spacing:0.152px;word-spacing:0.7px;">produtos e serviços</span>
<span style="position:absolute;left:198.80px;top:407.00px;height:16px;line-height:16px;white-space:pre;font-size:11.5px;color:#7a7a7a;letter-spacing:0.359px;">78.990,00</span>
<span style="position:absolute;left:16.00px;top:435.00px;height:16px;line-height:16px;white-space:pre;font-size:11.5px;color:#000;letter-spacing:0.131px;">Frete</span>
<span style="position:absolute;left:229.70px;top:434.00px;height:16px;line-height:16px;white-space:pre;font-size:11.5px;color:#000;letter-spacing:0.277px;">0,00</span>
<span style="position:absolute;left:16.00px;top:459.00px;height:16px;line-height:16px;white-space:pre;font-size:11.5px;color:#000;letter-spacing:-0.016px;">Seguro</span>
<span style="position:absolute;left:229.70px;top:458.00px;height:16px;line-height:16px;white-space:pre;font-size:11.5px;color:#000;letter-spacing:0.277px;">0,00</span>
<span style="position:absolute;left:16.00px;top:483.00px;height:16px;line-height:16px;white-space:pre;font-size:11.5px;color:#000;letter-spacing:0.024px;word-spacing:0.7px;">Outras despesas</span>
<span style="position:absolute;left:229.70px;top:482.00px;height:16px;line-height:16px;white-space:pre;font-size:11.5px;color:#000;letter-spacing:0.277px;">0,00</span>
<span style="position:absolute;left:20.50px;top:507.00px;height:16px;line-height:16px;white-space:pre;font-size:11.5px;color:#000;letter-spacing:0.082px;word-spacing:0.7px;">Desconto em R$</span>
<span style="position:absolute;left:229.70px;top:506.00px;height:16px;line-height:16px;white-space:pre;font-size:11.5px;color:#7a7a7a;letter-spacing:0.277px;">0,00</span>
<span style="position:absolute;left:16.00px;top:531.00px;height:16px;line-height:16px;white-space:pre;font-size:11.5px;color:#000;letter-spacing:0.205px;word-spacing:0.7px;">Valor total da nota</span>
<span style="position:absolute;left:198.80px;top:530.00px;height:16px;line-height:16px;white-space:pre;font-size:11.5px;color:#7a7a7a;letter-spacing:0.359px;">84.124,35</span>
<span style="position:absolute;left:16.00px;top:555.00px;height:16px;line-height:16px;white-space:pre;font-size:11.5px;color:#000;letter-spacing:0.177px;word-spacing:0.7px;">Valor contábil</span>
<span style="position:absolute;left:229.70px;top:554.00px;height:16px;line-height:16px;white-space:pre;font-size:11.5px;color:#7a7a7a;letter-spacing:0.277px;">0,00</span>
<span style="position:absolute;left:294.50px;top:436.00px;height:16px;line-height:16px;white-space:pre;font-size:11.5px;color:#000;letter-spacing:0.336px;word-spacing:0.7px;">Informar nos itens</span>
<span style="position:absolute;left:294.50px;top:460.00px;height:16px;line-height:16px;white-space:pre;font-size:11.5px;color:#000;letter-spacing:0.336px;word-spacing:0.7px;">Informar nos itens</span>
<span style="position:absolute;left:294.50px;top:484.00px;height:16px;line-height:16px;white-space:pre;font-size:11.5px;color:#000;letter-spacing:0.336px;word-spacing:0.7px;">Informar nos itens</span>
<span style="position:absolute;left:295.00px;top:508.00px;height:16px;line-height:16px;white-space:pre;font-size:11.5px;color:#000;letter-spacing:0.336px;word-spacing:0.7px;">Informar nos itens</span>
<span style="position:absolute;left:424.50px;top:405.00px;height:16px;line-height:16px;white-space:pre;font-size:11.5px;color:#444;letter-spacing:0.368px;">Imposto</span>
<span style="position:absolute;left:519.50px;top:405.00px;height:16px;line-height:16px;white-space:pre;font-size:11.5px;color:#444;letter-spacing:-0.040px;word-spacing:0.7px;">Base de cálculo</span>
<span style="position:absolute;left:619.50px;top:405.00px;height:16px;line-height:16px;white-space:pre;font-size:11.5px;color:#444;letter-spacing:0.040px;">Valor</span>
<span style="position:absolute;left:424.50px;top:429.00px;height:16px;line-height:16px;white-space:pre;font-size:11.5px;color:#000;letter-spacing:-0.021px;">IPI</span>
<span style="position:absolute;left:550.30px;top:429.00px;height:16px;line-height:16px;white-space:pre;font-size:11.5px;color:#000;letter-spacing:0.392px;">78.990,00</span>
<span style="position:absolute;left:657.30px;top:429.00px;height:16px;line-height:16px;white-space:pre;font-size:11.5px;color:#000;letter-spacing:0.429px;">5.134,35</span>
<span style="position:absolute;left:424.50px;top:451.00px;height:16px;line-height:16px;white-space:pre;font-size:11.5px;color:#444;letter-spacing:-0.349px;">PIS</span>
<span style="position:absolute;left:581.30px;top:451.00px;height:16px;line-height:16px;white-space:pre;font-size:11.5px;color:#444;letter-spacing:0.327px;">0,00</span>
<span style="position:absolute;left:681.80px;top:451.00px;height:16px;line-height:16px;white-space:pre;font-size:11.5px;color:#444;letter-spacing:0.327px;">0,00</span>
<span style="position:absolute;left:424.50px;top:472.00px;height:16px;line-height:16px;white-space:pre;font-size:11.5px;color:#444;letter-spacing:-0.409px;">COFINS</span>
<span style="position:absolute;left:581.30px;top:472.00px;height:16px;line-height:16px;white-space:pre;font-size:11.5px;color:#444;letter-spacing:0.327px;">0,00</span>
<span style="position:absolute;left:681.80px;top:472.00px;height:16px;line-height:16px;white-space:pre;font-size:11.5px;color:#444;letter-spacing:0.327px;">0,00</span>
<span style="position:absolute;left:424.50px;top:493.00px;height:16px;line-height:16px;white-space:pre;font-size:11.5px;color:#444;letter-spacing:-0.312px;">ICMS</span>
<span style="position:absolute;left:550.30px;top:493.00px;height:16px;line-height:16px;white-space:pre;font-size:11.5px;color:#444;letter-spacing:0.392px;">78.990,00</span>
<span style="position:absolute;left:657.30px;top:493.00px;height:16px;line-height:16px;white-space:pre;font-size:11.5px;color:#444;letter-spacing:0.429px;">9.478,80</span>
<span style="position:absolute;left:28.70px;top:588.00px;height:16px;line-height:16px;white-space:pre;font-size:11.5px;color:#444;letter-spacing:0.146px;word-spacing:0.7px;">Endereço de entrega/local de prestação do serviço (se diferente do endereço sede)</span>
<span style="position:absolute;left:28.70px;top:607.00px;height:16px;line-height:16px;white-space:pre;font-size:11.5px;color:#444;letter-spacing:0.153px;word-spacing:0.7px;">Local de retirada (se diferente do endereço sede)</span>
<span style="position:absolute;left:13.00px;top:624.00px;height:19px;line-height:19px;white-space:pre;font-size:13.5px;color:#555;letter-spacing:0.057px;">Cobrança</span>
<div style="position:absolute;left:0;top:639px;width:1346px;height:6px;background:#1b2a3d;"></div>
</body></html>
